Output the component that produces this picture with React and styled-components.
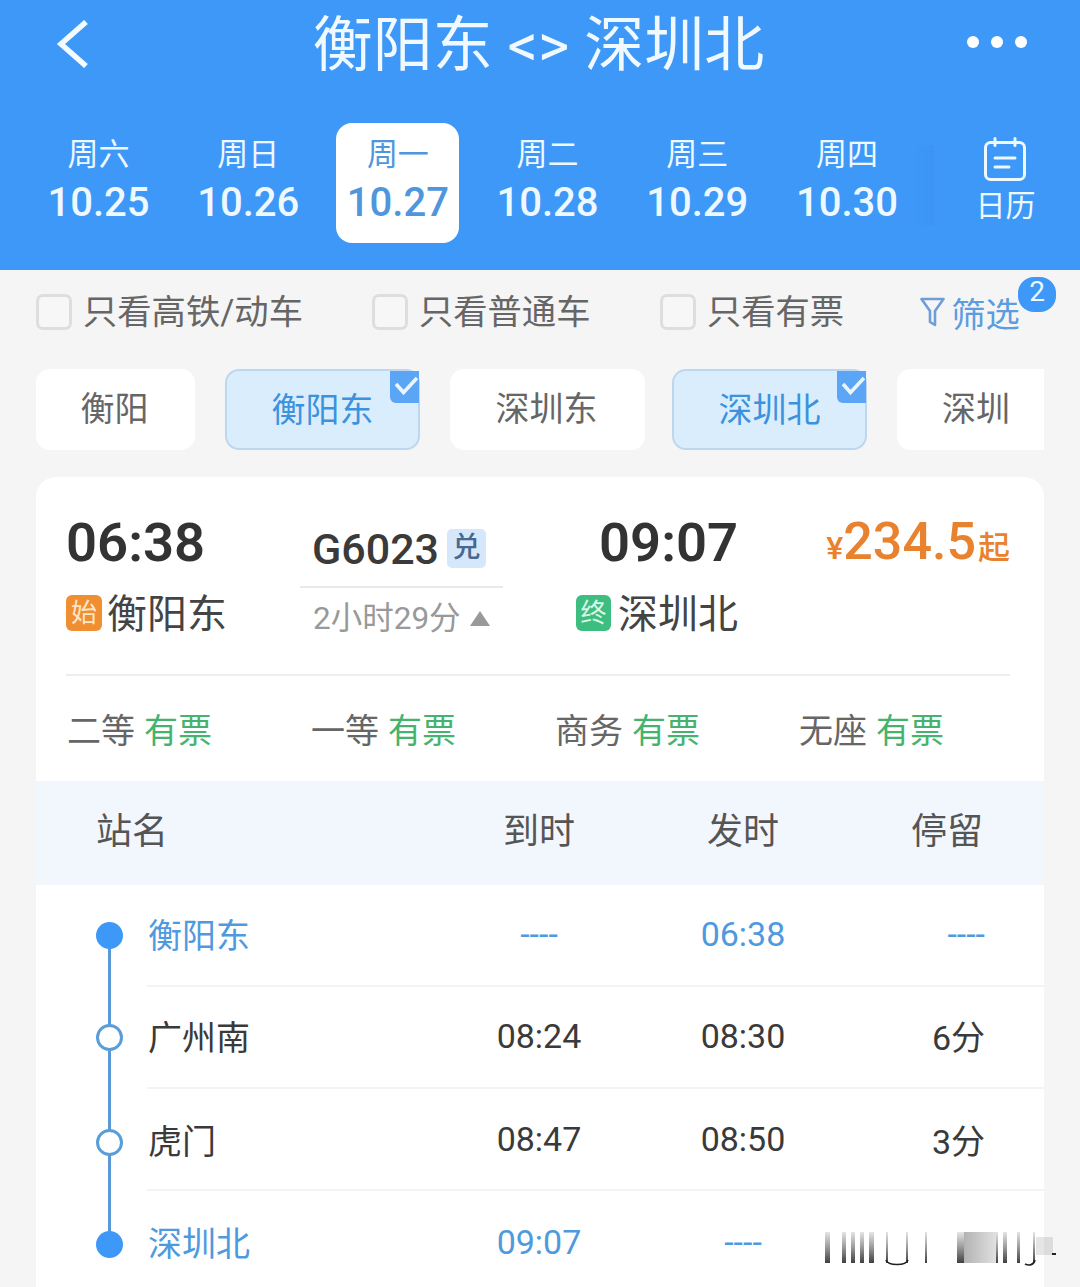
import React from 'react';
import styled, { createGlobalStyle } from 'styled-components';

const GlobalStyle = createGlobalStyle`
  html, body { margin: 0; padding: 0; background: #f5f5f5; }
  body { font-family: Roboto, "Noto Sans CJK SC", sans-serif; width: 1080px; height: 1287px; overflow: hidden; }
  * { box-sizing: border-box; }
`;

const Page = styled.div`
  position: relative;
  width: 1080px;
  height: 1287px;
  overflow: hidden;
  background: #f5f5f5;
`;

const Header = styled.header`
  height: 270px;
  background: #3d98f8;
  color: #fff;
`;

const TopBar = styled.div`
  height: 88px;
  display: flex;
  align-items: center;
  justify-content: space-between;
  padding: 0 53px 0 56px;
`;

const Title = styled.h1`
  margin: 4px 0 0 22px;
  font-size: 60px;
  font-weight: 400;
  line-height: 84px;
  white-space: pre;
  color: #f0f9ff;
`;

const Dots = styled.div`
  display: flex;
  gap: 12px;
  margin-top: -4px;
`;

const Dot = styled.span`
  width: 12px;
  height: 12px;
  border-radius: 50%;
  background: #fff;
`;

const DayBar = styled.div`
  display: flex;
  margin-top: 35px;
  padding-left: 37px;
`;

const Days = styled.div`
  display: flex;
  gap: 26.7px;
`;

const Day = styled.div`
  width: 123px;
  height: 120px;
  border-radius: 16px;
  display: flex;
  flex-direction: column;
  align-items: center;
  padding-top: 11px;
  background: ${({ $active }) => ($active ? '#fff' : 'transparent')};
  color: ${({ $active }) => ($active ? '#4f96dc' : '#eef8ff')};
`;

const DayName = styled.span`
  font-size: 31px;
  line-height: 42px;
`;

const DayDate = styled.span`
  font-size: 40px;
  font-weight: 500;
  line-height: 50px;
  margin-top: 2px;
`;

const CalendarButton = styled.div`
  position: relative;
  width: 140px;
  margin-left: 27px;
  display: flex;
  flex-direction: column;
  align-items: center;
  padding-top: 14px;
  color: #eef8ff;
  &::before {
    content: '';
    position: absolute;
    left: -23px;
    top: 22px;
    bottom: 18px;
    width: 22px;
    background: linear-gradient(to right, rgba(50, 130, 225, 0), rgba(50, 130, 225, 0.16));
  }
`;

const CalendarLabel = styled.span`
  font-size: 30px;
  line-height: 40px;
  margin-top: 5px;
`;

const FilterRow = styled.div`
  display: flex;
  align-items: center;
  height: 36px;
  margin-top: 24px;
  padding-left: 36px;
  font-size: 34.3px;
  color: #666;
`;

const Check = styled.label`
  display: flex;
  align-items: center;
  gap: 11px;
  margin-right: ${({ $gap }) => $gap}px;
  line-height: 36px;
`;

const Box = styled.span`
  width: 36px;
  height: 36px;
  border: 3px solid #dedede;
  border-radius: 7px;
  background: #f7f7f7;
`;

const FilterButton = styled.div`
  position: relative;
  display: flex;
  align-items: center;
  gap: 6px;
  color: #5b9de0;
`;

const Badge = styled.span`
  position: absolute;
  left: 98px;
  top: -10px;
  width: 38px;
  height: 35px;
  border-radius: 16px;
  background: #3d98f8;
  color: #eef8ff;
  font-size: 28px;
  line-height: 30px;
  text-align: center;
`;

const ChipRow = styled.div`
  display: flex;
  width: 1008px;
  margin: 39px 0 0 36px;
  overflow: hidden;
`;

const Chip = styled.div`
  position: relative;
  flex: none;
  width: ${({ $w }) => $w}px;
  height: 81px;
  margin-right: ${({ $after }) => $after || 0}px;
  padding-right: ${({ $selected }) => ($selected ? 0 : 2)}px;
  border-radius: 14px;
  border: ${({ $selected }) => ($selected ? '2px solid #bdd7f0' : 'none')};
  background: ${({ $selected }) => ($selected ? '#daedfd' : '#fff')};
  color: ${({ $selected }) => ($selected ? '#3c92dd' : '#666')};
  font-size: 34px;
  line-height: ${({ $selected }) => ($selected ? 79 : 81)}px;
  text-align: center;
`;

const ChipTick = styled.svg`
  position: absolute;
  top: 0;
  right: -1px;
`;

const Card = styled.section`
  width: 1008px;
  margin: 27px 0 0 36px;
  background: #fff;
  border-radius: 20px 20px 0 0;
`;

const Summary = styled.div`
  display: flex;
  height: 199px;
  margin: 0 34px 0 30px;
  border-bottom: 2px solid #eeeeee;
`;

const DepartColumn = styled.div`
  width: ${({ $w }) => $w}px;
  padding-top: 36px;
`;

const ClockTime = styled.div`
  font-size: 54.4px;
  font-weight: 600;
  line-height: 60px;
  color: #333;
  margin-left: ${({ $indent }) => $indent || 0}px;
`;

const StationLine = styled.div`
  display: flex;
  align-items: center;
  gap: 5px;
  height: 44px;
  margin-top: 16px;
  font-size: 40px;
  color: #444;
`;

const EndTag = styled.span`
  width: ${({ $kind }) => ($kind === 'start' ? 36 : 35)}px;
  height: 36px;
  margin-top: 4px;
  margin-right: ${({ $kind }) => ($kind === 'start' ? 0 : 2)}px;
  border-radius: 6px;
  background: ${({ $kind }) => ($kind === 'start' ? '#f08e32' : '#3dbd80')};
  color: ${({ $kind }) => ($kind === 'start' ? '#ffe6c8' : '#d8f8e6')};
  font-size: 26px;
  line-height: 36px;
  text-align: center;
`;

const TrainColumn = styled.div`
  width: 203px;
  margin-right: 73px;
  padding-top: 47px;
`;

const TrainLine = styled.div`
  display: flex;
  align-items: center;
  gap: 8px;
  height: 50px;
  padding-left: 12px;
  font-size: 43px;
  font-weight: 500;
  color: #3a3a3a;
`;

const ExchangeTag = styled.span`
  width: 39px;
  height: 39px;
  margin-top: -2px;
  border-radius: 5px;
  background: #d6e7fb;
  color: #47688f;
  font-size: 28px;
  font-weight: 500;
  line-height: 38px;
  text-align: center;
`;

const TrainRule = styled.div`
  margin-top: 12px;
  border-top: 2px solid #e9e9e9;
`;

const Duration = styled.div`
  display: flex;
  align-items: center;
  gap: 9px;
  height: 40px;
  margin-top: 7px;
  padding-left: 13px;
  font-size: 31.5px;
  color: #999;
`;

const Caret = styled.span`
  width: 0;
  height: 0;
  margin-top: 6px;
  border-left: 10.5px solid transparent;
  border-right: 10.5px solid transparent;
  border-bottom: 15px solid #999;
`;

const Price = styled.div`
  flex: 1;
  display: flex;
  justify-content: flex-end;
  align-items: baseline;
  height: 60px;
  margin-top: 35px;
  color: #e9822e;
  font-weight: 500;
  font-size: 52px;
  line-height: 60px;
`;

const PriceUnit = styled.span`
  font-size: ${({ $size }) => $size}px;
  margin-left: ${({ $gap }) => $gap || 0}px;
`;

const SeatRow = styled.div`
  display: grid;
  grid-template-columns: repeat(4, 244px);
  align-items: center;
  height: 105px;
  padding-left: 31px;
  font-size: 34px;
  color: #666;
`;

const Seat = styled.div`
  display: flex;
  gap: 9px;
`;

const SeatState = styled.span`
  color: #45b36d;
`;

const StopHead = styled.div`
  display: grid;
  grid-template-columns: 401px 204px 204px 199px;
  align-items: center;
  height: 104px;
  padding-bottom: 10px;
  background: #f2f7fd;
  font-size: 36px;
  color: #555;
`;

const HeadCell = styled.div`
  text-align: center;
  padding-left: ${({ $pad }) => $pad || 0}px;
  &:first-child {
    text-align: left;
    padding-left: 60px;
  }
`;

const Stop = styled.div`
  display: flex;
  height: ${({ $h }) => $h}px;
`;

const Rail = styled.div`
  position: relative;
  flex: none;
  width: 111px;
  display: flex;
  align-items: center;
  padding: 0 0 2px 60px;
  &::before {
    content: '';
    position: absolute;
    left: 71.5px;
    top: ${({ $first }) => ($first ? '50%' : '0')};
    bottom: ${({ $last }) => ($last ? '50%' : '0')};
    width: 3px;
    background: #5a98d6;
  }
`;

const StopDot = styled.span`
  position: relative;
  width: 27px;
  height: 27px;
  margin-top: ${({ $nudge }) => $nudge || 0}px;
  border-radius: 50%;
  background: ${({ $filled }) => ($filled ? '#3d98f8' : '#fff')};
  border: ${({ $filled }) => ($filled ? 'none' : '3px solid #5a9ed9')};
`;

const StopBody = styled.div`
  flex: 1;
  display: grid;
  grid-template-columns: 290px 204px 204px 199px;
  align-items: center;
  padding-bottom: ${({ $lift }) => $lift}px;
  border-bottom: ${({ $last }) => ($last ? 'none' : '2px solid #f3f3f3')};
  font-size: 34px;
  color: ${({ $accent }) => ($accent ? '#4f9ade' : '#3a3a3a')};
`;

const StopName = styled.div`
  padding-left: 1px;
`;

const StopTime = styled.div`
  text-align: center;
  color: ${({ $blank }) => ($blank ? '#4f9ade' : 'inherit')};
`;

const StopWait = styled.div`
  text-align: right;
  padding-right: 59px;
`;

const Smudge = styled.svg`
  position: absolute;
  left: 815px;
  top: 1228px;
`;

const days = [
  ['周六', '10.25'],
  ['周日', '10.26'],
  ['周一', '10.27', true],
  ['周二', '10.28'],
  ['周三', '10.29'],
  ['周四', '10.30'],
];

const chips = [
  { name: '衡阳', w: 159, after: 30 },
  { name: '衡阳东', w: 195, after: 30, selected: true },
  { name: '深圳东', w: 195, after: 27 },
  { name: '深圳北', w: 195, after: 30, selected: true },
  { name: '深圳', w: 160 },
];

const stops = [
  { name: '衡阳东', arrive: '----', leave: '06:38', wait: '----', accent: true, h: 102, lift: 3 },
  { name: '广州南', arrive: '08:24', leave: '08:30', wait: '6分', h: 102, lift: 3 },
  { name: '虎门', arrive: '08:47', leave: '08:50', wait: '3分', h: 102, lift: 0, nudge: 6 },
  { name: '深圳北', arrive: '09:07', leave: '----', wait: '', accent: true, h: 104, lift: 3, nudge: 4 },
];

const bars = [[10, 5], [27, 4], [36, 4], [45, 4], [54, 5], [71, 2], [91, 2], [110, 2], [142, 7], [181, 2], [188, 4], [202, 3], [218, 2]];

const Tick = () => (
  <ChipTick width="30" height="32" viewBox="0 0 30 32">
    <path d="M1 0h29v32H7a6 6 0 0 1-6-6z" fill="#5aa5f5" />
    <path d="M7 13l7.5 8.5L28 7" fill="none" stroke="#eaf5ff" strokeWidth="3.6" />
  </ChipTick>
);

const FilterIcon = () => (
  <svg width="25" height="30" viewBox="0 0 25 30" fill="none" stroke="#6f9ed6" strokeWidth="2.6" strokeLinejoin="round">
    <path d="M1.5 2h22l-8.5 12v14l-5-3V14z" />
  </svg>
);

const CalendarIcon = () => (
  <svg width="42" height="44" viewBox="0 0 42 44" fill="none" stroke="#eef8ff" strokeWidth="3" strokeLinecap="round">
    <rect x="1.5" y="5.5" width="39" height="37" rx="5" />
    <path d="M11 1.5v7M31 1.5v7M11 21h20M11 30h14" />
  </svg>
);

const BackIcon = () => (
  <svg width="32" height="48" viewBox="0 0 32 48" fill="none" stroke="#f4fbff" strokeWidth="5.5">
    <path d="M30 2L5 24l25 22" />
  </svg>
);

const App = () => {
  return (
    <Page>
      <GlobalStyle />
      <Header>
        <TopBar>
          <BackIcon />
          <Title>衡阳东 {'<>'} 深圳北</Title>
          <Dots><Dot /><Dot /><Dot /></Dots>
        </TopBar>
        <DayBar>
          <Days>
            {days.map(([name, date, active]) => (
              <Day key={date} $active={active}>
                <DayName>{name}</DayName>
                <DayDate>{date}</DayDate>
              </Day>
            ))}
          </Days>
          <CalendarButton>
            <CalendarIcon />
            <CalendarLabel>日历</CalendarLabel>
          </CalendarButton>
        </DayBar>
      </Header>

      <FilterRow>
        <Check $gap={69}><Box />只看高铁/动车</Check>
        <Check $gap={69.5}><Box />只看普通车</Check>
        <Check $gap={76}><Box />只看有票</Check>
        <FilterButton>
          <FilterIcon />
          筛选
          <Badge>2</Badge>
        </FilterButton>
      </FilterRow>

      <ChipRow>
        {chips.map((chip) => (
          <Chip key={chip.name} $w={chip.w} $after={chip.after} $selected={chip.selected}>
            {chip.name}
            {chip.selected && <Tick />}
          </Chip>
        ))}
      </ChipRow>

      <Card>
        <Summary>
          <DepartColumn $w={234}>
            <ClockTime>06:38</ClockTime>
            <StationLine><EndTag $kind="start">始</EndTag>衡阳东</StationLine>
          </DepartColumn>
          <TrainColumn>
            <TrainLine>G6023<ExchangeTag>兑</ExchangeTag></TrainLine>
            <TrainRule />
            <Duration>2小时29分<Caret /></Duration>
          </TrainColumn>
          <DepartColumn $w={170}>
            <ClockTime $indent={23}>09:07</ClockTime>
            <StationLine><EndTag $kind="end">终</EndTag>深圳北</StationLine>
          </DepartColumn>
          <Price>
            <PriceUnit $size={32}>¥</PriceUnit>
            234.5
            <PriceUnit $size={32} $gap={2}>起</PriceUnit>
          </Price>
        </Summary>

        <SeatRow>
          {['二等', '一等', '商务', '无座'].map((seat) => (
            <Seat key={seat}>{seat}<SeatState>有票</SeatState></Seat>
          ))}
        </SeatRow>

        <StopHead>
          <HeadCell>站名</HeadCell>
          <HeadCell>到时</HeadCell>
          <HeadCell>发时</HeadCell>
          <HeadCell $pad={5}>停留</HeadCell>
        </StopHead>

        {stops.map((stop, i) => (
          <Stop key={stop.name} $h={stop.h}>
            <Rail $first={i === 0} $last={i === stops.length - 1}>
              <StopDot $filled={stop.accent} $nudge={stop.nudge} />
            </Rail>
            <StopBody $accent={stop.accent} $lift={stop.lift} $last={i === stops.length - 1}>
              <StopName>{stop.name}</StopName>
              <StopTime $blank={stop.arrive === '----'}>{stop.arrive}</StopTime>
              <StopTime $blank={stop.leave === '----'}>{stop.leave}</StopTime>
              <StopWait>{stop.wait}</StopWait>
            </StopBody>
          </Stop>
        ))}
      </Card>

      <Smudge width="245" height="42" viewBox="0 0 245 42">
        <defs>
          <linearGradient id="fade" x1="0" y1="0" x2="0" y2="1">
            <stop offset="0" stopColor="#000" stopOpacity="0.1" />
            <stop offset="0.5" stopColor="#000" stopOpacity="0.4" />
            <stop offset="1" stopColor="#000" stopOpacity="0.75" />
          </linearGradient>
          <linearGradient id="block" x1="0" y1="0" x2="1" y2="0">
            <stop offset="0" stopColor="#000" stopOpacity="0.3" />
            <stop offset="1" stopColor="#000" stopOpacity="0.12" />
          </linearGradient>
        </defs>
        <rect x="149" y="4" width="32" height="31" fill="url(#block)" />
        <rect x="221" y="9" width="17" height="18" fill="#000" opacity="0.1" />
        {bars.map(([x, w]) => (
          <rect key={x} x={x} y="4" width={w} height="31" fill="url(#fade)" />
        ))}
        <path d="M71 32c2 6 20 6 22 0M210 36c4 2 9 1 10-4" fill="none" stroke="#222" strokeWidth="1.6" />
        <rect x="237" y="25" width="4" height="2" fill="#222" />
      </Smudge>
    </Page>
  );
};

export default App;
